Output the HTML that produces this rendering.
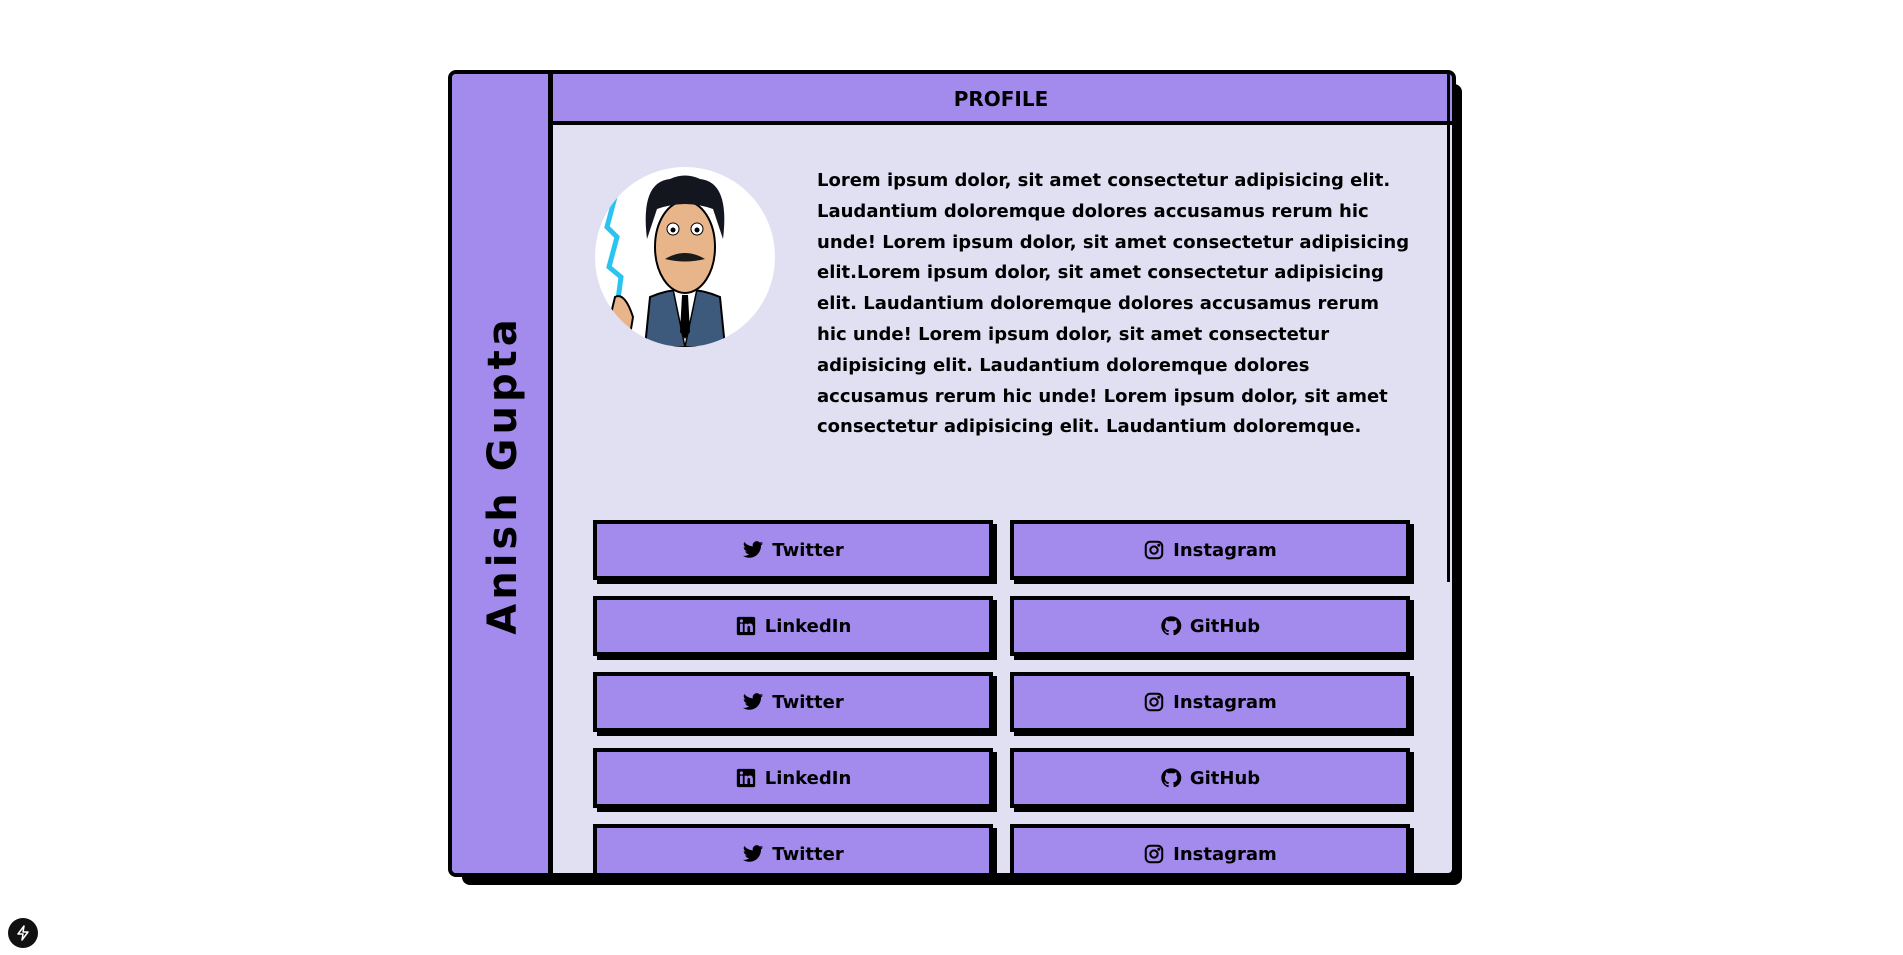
<!DOCTYPE html>
<html><head><meta charset="utf-8"><style>
*{margin:0;padding:0;box-sizing:border-box}
body{width:1903px;height:955px;background:#fff;position:relative;overflow:hidden;font-family:"DejaVu Sans","Liberation Sans",sans-serif;font-weight:bold;color:#000}
.shadow{position:absolute;left:462px;top:84px;width:1000px;height:801px;background:#000;border-radius:8px}
.card{position:absolute;left:448px;top:70px;width:1008px;height:807px;border:4px solid #000;border-radius:8px;background:#e1dff2;overflow:hidden}
.side{position:absolute;left:0;top:0;width:101px;height:100%;background:#a38aed;border-right:5px solid #000}
.name{position:absolute;left:51px;top:401px;transform:translate(-50%,-50%) rotate(-90deg);font-size:40px;letter-spacing:4px;white-space:nowrap}
.head{position:absolute;left:101px;top:0;right:0;height:51px;background:#a38aed;border-bottom:4px solid #000;font-size:20px}
.head span{position:absolute;left:448px;top:25px;transform:translate(-50%,-50%)}
.scroll{position:absolute;left:995px;top:0;width:3px;height:508px;background:#000}
.av{position:absolute;left:143px;top:93px;width:180px;height:180px;border-radius:50%;background:#fff;overflow:hidden}
.txt{position:absolute;left:365px;top:92px;font-size:18px;line-height:30.8px;white-space:nowrap}
.btn{position:absolute;width:404px;height:64px}
.btn .s{position:absolute;left:4px;top:4px;width:400px;height:60px;background:#000}
.btn .b{position:absolute;left:0;top:0;width:400px;height:60px;background:#a38aed;border:4px solid #000;display:flex;align-items:center;justify-content:center;font-size:18px;gap:8px}
.btn svg{width:22px;height:22px}
.dev{position:absolute;left:8px;top:918px;width:30px;height:30px;border-radius:50%;background:#111;display:flex;align-items:center;justify-content:center}
</style></head><body>
<div class="shadow"></div>
<div class="card">
<div class="side"><div class="name">Anish Gupta</div></div>
<div class="head"><span>PROFILE</span></div>
<div class="scroll"></div>
<div class="av"><svg width="180" height="180" viewBox="0 0 180 180">
<path d="M20 30 L12 60 L22 70 L14 100 L26 110 L22 140" stroke="#2bc4f0" stroke-width="5" fill="none"/>
<path d="M20 130 q10 -5 18 20 l-5 30 l-25 0z" fill="#e8b48a" stroke="#000" stroke-width="2"/>
<path d="M50 180 L55 130 Q90 115 125 130 L130 180z" fill="#3d5a7c" stroke="#000" stroke-width="2"/>
<path d="M78 122 L90 180 L102 122z" fill="#fff" stroke="#000" stroke-width="1.5"/>
<path d="M87 128 L93 128 L95 165 L90 172 L85 165z" fill="#000"/>
<ellipse cx="90" cy="80" rx="30" ry="46" fill="#e8b48a" stroke="#000" stroke-width="2"/>
<path d="M52 72 Q45 15 75 12 Q90 5 105 12 Q135 15 128 72 L118 42 Q90 32 62 42z" fill="#14161f"/>
<path d="M70 92 Q90 80 110 92 Q90 97 70 92z" fill="#1a1a1a"/>
<circle cx="78" cy="62" r="6" fill="#fff" stroke="#000"/><circle cx="102" cy="62" r="6" fill="#fff" stroke="#000"/>
<circle cx="78" cy="63" r="2.5"/><circle cx="102" cy="63" r="2.5"/>
</svg></div>
<div class="txt">Lorem ipsum dolor, sit amet consectetur adipisicing elit.<br>Laudantium doloremque dolores accusamus rerum hic<br>unde! Lorem ipsum dolor, sit amet consectetur adipisicing<br>elit.Lorem ipsum dolor, sit amet consectetur adipisicing<br>elit. Laudantium doloremque dolores accusamus rerum<br>hic unde! Lorem ipsum dolor, sit amet consectetur<br>adipisicing elit. Laudantium doloremque dolores<br>accusamus rerum hic unde! Lorem ipsum dolor, sit amet<br>consectetur adipisicing elit. Laudantium doloremque.</div>

<div class="btn" style="left:141px;top:446px"><div class="s"></div><div class="b"><svg viewBox="0 0 24 24"><path d="M23 4.6a9 9 0 0 1-2.6.7 4.6 4.6 0 0 0 2-2.5 9 9 0 0 1-2.9 1.1A4.5 4.5 0 0 0 11.8 8 12.8 12.8 0 0 1 2.5 3.3a4.5 4.5 0 0 0 1.4 6 4.5 4.5 0 0 1-2-.5 4.5 4.5 0 0 0 3.6 4.5 4.5 4.5 0 0 1-2 .1 4.5 4.5 0 0 0 4.2 3.1A9 9 0 0 1 1 18.4 12.8 12.8 0 0 0 7.9 20.4c8.3 0 12.8-6.9 12.8-12.8v-.6A9 9 0 0 0 23 4.6z"/></svg>Twitter</div></div>
<div class="btn" style="left:558px;top:446px"><div class="s"></div><div class="b"><svg viewBox="0 0 24 24" fill="none" stroke="#000" stroke-width="2.2"><rect x="3" y="3" width="18" height="18" rx="5"/><circle cx="12" cy="12" r="4"/><circle cx="17.3" cy="6.7" r=".6" fill="#000"/></svg>Instagram</div></div>
<div class="btn" style="left:141px;top:522px"><div class="s"></div><div class="b"><svg viewBox="0 0 24 24"><rect x="2" y="2" width="20" height="20" rx="2"/><rect x="5.5" y="9.5" width="3" height="9" fill="#a38aed"/><circle cx="7" cy="6.5" r="1.7" fill="#a38aed"/><path d="M10.5 9.5h2.8v1.3c.6-1 1.7-1.5 3-1.5 2.3 0 3.2 1.4 3.2 4v5.2h-3v-4.6c0-1.2-.3-2-1.4-2s-1.6.8-1.6 2v4.6h-3z" fill="#a38aed"/></svg>LinkedIn</div></div>
<div class="btn" style="left:558px;top:522px"><div class="s"></div><div class="b"><svg viewBox="0 0 24 24"><path d="M12 1.5a10.5 10.5 0 0 0-3.3 20.5c.5.1.7-.2.7-.5v-1.9c-2.9.6-3.5-1.2-3.5-1.2-.5-1.2-1.2-1.6-1.2-1.6-.9-.7.1-.6.1-.6 1 .1 1.6 1.1 1.6 1.1.9 1.6 2.5 1.1 3.1.9.1-.7.4-1.1.7-1.4-2.3-.3-4.8-1.2-4.8-5.2 0-1.1.4-2.1 1.1-2.8-.1-.3-.5-1.3.1-2.8 0 0 .9-.3 2.9 1.1a10 10 0 0 1 5.3 0c2-1.4 2.9-1.1 2.9-1.1.6 1.5.2 2.5.1 2.8.7.7 1.1 1.7 1.1 2.8 0 4-2.5 4.9-4.8 5.2.4.3.7 1 .7 1.9v2.9c0 .3.2.6.7.5A10.5 10.5 0 0 0 12 1.5z"/></svg>GitHub</div></div>
<div class="btn" style="left:141px;top:598px"><div class="s"></div><div class="b"><svg viewBox="0 0 24 24"><path d="M23 4.6a9 9 0 0 1-2.6.7 4.6 4.6 0 0 0 2-2.5 9 9 0 0 1-2.9 1.1A4.5 4.5 0 0 0 11.8 8 12.8 12.8 0 0 1 2.5 3.3a4.5 4.5 0 0 0 1.4 6 4.5 4.5 0 0 1-2-.5 4.5 4.5 0 0 0 3.6 4.5 4.5 4.5 0 0 1-2 .1 4.5 4.5 0 0 0 4.2 3.1A9 9 0 0 1 1 18.4 12.8 12.8 0 0 0 7.9 20.4c8.3 0 12.8-6.9 12.8-12.8v-.6A9 9 0 0 0 23 4.6z"/></svg>Twitter</div></div>
<div class="btn" style="left:558px;top:598px"><div class="s"></div><div class="b"><svg viewBox="0 0 24 24" fill="none" stroke="#000" stroke-width="2.2"><rect x="3" y="3" width="18" height="18" rx="5"/><circle cx="12" cy="12" r="4"/><circle cx="17.3" cy="6.7" r=".6" fill="#000"/></svg>Instagram</div></div>
<div class="btn" style="left:141px;top:674px"><div class="s"></div><div class="b"><svg viewBox="0 0 24 24"><rect x="2" y="2" width="20" height="20" rx="2"/><rect x="5.5" y="9.5" width="3" height="9" fill="#a38aed"/><circle cx="7" cy="6.5" r="1.7" fill="#a38aed"/><path d="M10.5 9.5h2.8v1.3c.6-1 1.7-1.5 3-1.5 2.3 0 3.2 1.4 3.2 4v5.2h-3v-4.6c0-1.2-.3-2-1.4-2s-1.6.8-1.6 2v4.6h-3z" fill="#a38aed"/></svg>LinkedIn</div></div>
<div class="btn" style="left:558px;top:674px"><div class="s"></div><div class="b"><svg viewBox="0 0 24 24"><path d="M12 1.5a10.5 10.5 0 0 0-3.3 20.5c.5.1.7-.2.7-.5v-1.9c-2.9.6-3.5-1.2-3.5-1.2-.5-1.2-1.2-1.6-1.2-1.6-.9-.7.1-.6.1-.6 1 .1 1.6 1.1 1.6 1.1.9 1.6 2.5 1.1 3.1.9.1-.7.4-1.1.7-1.4-2.3-.3-4.8-1.2-4.8-5.2 0-1.1.4-2.1 1.1-2.8-.1-.3-.5-1.3.1-2.8 0 0 .9-.3 2.9 1.1a10 10 0 0 1 5.3 0c2-1.4 2.9-1.1 2.9-1.1.6 1.5.2 2.5.1 2.8.7.7 1.1 1.7 1.1 2.8 0 4-2.5 4.9-4.8 5.2.4.3.7 1 .7 1.9v2.9c0 .3.2.6.7.5A10.5 10.5 0 0 0 12 1.5z"/></svg>GitHub</div></div>
<div class="btn" style="left:141px;top:750px"><div class="s"></div><div class="b"><svg viewBox="0 0 24 24"><path d="M23 4.6a9 9 0 0 1-2.6.7 4.6 4.6 0 0 0 2-2.5 9 9 0 0 1-2.9 1.1A4.5 4.5 0 0 0 11.8 8 12.8 12.8 0 0 1 2.5 3.3a4.5 4.5 0 0 0 1.4 6 4.5 4.5 0 0 1-2-.5 4.5 4.5 0 0 0 3.6 4.5 4.5 4.5 0 0 1-2 .1 4.5 4.5 0 0 0 4.2 3.1A9 9 0 0 1 1 18.4 12.8 12.8 0 0 0 7.9 20.4c8.3 0 12.8-6.9 12.8-12.8v-.6A9 9 0 0 0 23 4.6z"/></svg>Twitter</div></div>
<div class="btn" style="left:558px;top:750px"><div class="s"></div><div class="b"><svg viewBox="0 0 24 24" fill="none" stroke="#000" stroke-width="2.2"><rect x="3" y="3" width="18" height="18" rx="5"/><circle cx="12" cy="12" r="4"/><circle cx="17.3" cy="6.7" r=".6" fill="#000"/></svg>Instagram</div></div>
</div>
<div class="dev"><svg width="14" height="16" viewBox="0 0 14 16" fill="none" stroke="#fff" stroke-width="1.5" stroke-linejoin="round"><path d="M8 1 L2 9 H7 L6 15 L12 7 H7 Z"/></svg></div>
</body></html>
